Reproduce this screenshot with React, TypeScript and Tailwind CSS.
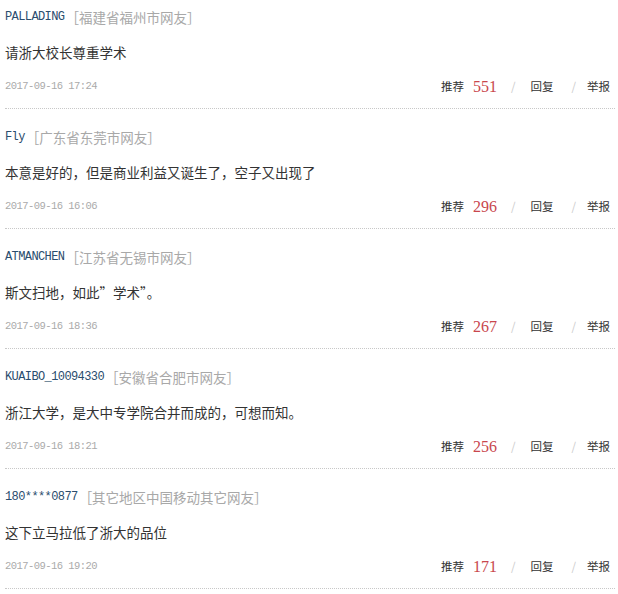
const comments = [
    { user: "PALLADING", loc: "［福建省福州市网友］", text: "请浙大校长尊重学术", time: "2017-09-16 17:24", votes: 551 },
    { user: "Fly", loc: "［广东省东莞市网友］", text: "本意是好的，但是商业利益又诞生了，空子又出现了", time: "2017-09-16 16:06", votes: 296 },
    { user: "ATMANCHEN", loc: "［江苏省无锡市网友］", text: "斯文扫地，如此”学术”。", time: "2017-09-16 18:36", votes: 267 },
    { user: "KUAIBO_10094330", loc: "［安徽省合肥市网友］", text: "浙江大学，是大中专学院合并而成的，可想而知。", time: "2017-09-16 18:21", votes: 256 },
    { user: "180****0877", loc: "［其它地区中国移动其它网友］", text: "这下立马拉低了浙大的品位", time: "2017-09-16 19:20", votes: 171 },
];

const cjk = "font-['Noto_Sans_CJK_SC',sans-serif]";

export default function App() {
    return (
        <div className="w-[618px] h-[594px] bg-white overflow-hidden px-[5px]">
            {comments.map((c, i) => (
                <div
                    key={i}
                    className={`${i === 0 ? "pt-[7px]" : "pt-[18px]"} pb-[11px] border-b border-dotted border-[#c8c8c8] w-[610px]`}
                >
                    {/* user + location */}
                    <div className="flex items-center h-[20px] whitespace-nowrap">
                        <span className="font-['Liberation_Mono',monospace] text-[12px] tracking-[-0.6px] text-[#2a4d6e]">{c.user}</span>
                        <span className={`${cjk} text-[13.5px] text-[#a8a8a8] ml-[1px]`}>{c.loc}</span>
                    </div>

                    {/* content */}
                    <div className={`${cjk} text-[13.5px] leading-[20px] h-[20px] text-[#333] mt-[15px] whitespace-nowrap`}>
                        {c.text}
                    </div>

                    {/* time + actions */}
                    <div className="flex items-center justify-between h-[20px] mt-[15px] pr-[5px]">
                        <span className="font-['Liberation_Mono',monospace] text-[10.5px] tracking-[-0.55px] text-[#aaa]">{c.time}</span>
                        <div className={`flex items-center ${cjk} text-[11.5px] text-[#333]`}>
                            <span>推荐</span>
                            <span className="font-['Liberation_Serif',serif] text-[16px] text-[#c9474d] ml-[9px]">{c.votes}</span>
                            <span className="text-[#ccc] ml-[14px] mr-[15px]">/</span>
                            <span>回复</span>
                            <span className="text-[#ccc] ml-[18px] mr-[11px]">/</span>
                            <span>举报</span>
                        </div>
                    </div>
                </div>
            ))}
        </div>
    );
}
